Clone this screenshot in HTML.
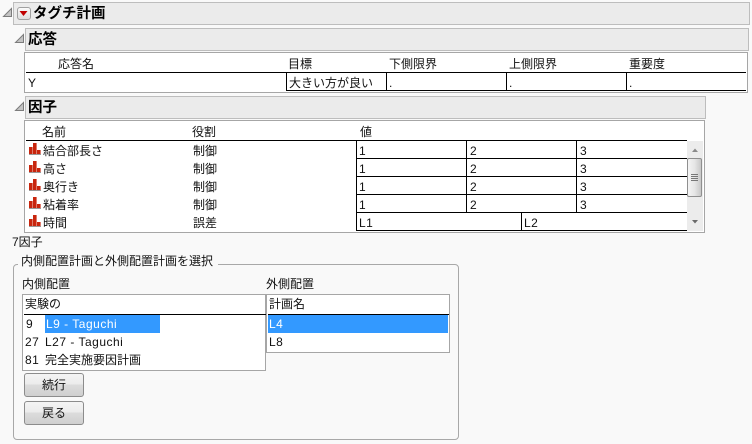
<!DOCTYPE html>
<html lang="ja"><head><meta charset="utf-8"><style>
html,body{margin:0;padding:0}
body{width:752px;height:444px;overflow:hidden;background:#f9f9f9;position:relative;font-family:"Liberation Sans","Noto Sans CJK JP",sans-serif;font-size:12px;color:#111}
div,span.t{position:absolute;box-sizing:border-box}
.t{line-height:18px;white-space:nowrap;height:18px}
.l{letter-spacing:.5px}
.bar{background:#ebebeb;border:1px solid #bdbdbd}
.b{font-weight:bold;color:#000}
.k{background:#000}
.box{background:#fff;border:1px solid #a6a6a6}
.btn{width:60px;height:24px;border:1px solid #8c8c8c;border-radius:3px;background:linear-gradient(#f4f4f4 0,#ececec 45%,#dcdcdc 50%,#cfcfcf 100%);text-align:center;line-height:22px}
svg{position:absolute;overflow:visible}
</style></head><body>

<!-- disclosure triangles -->
<svg style="left:0;top:0" width="30" height="125"><g fill="#c4c4c4" stroke="#7c7c7c" stroke-width="1"><path d="M11.500 8.500V16.500H3.500Z"/><path d="M23.500 34.500V42.500H15.500Z"/><path d="M23.500 102.500V110.500H15.500Z"/></g></svg>

<!-- title -->
<div class="bar" style="left:13px;top:2px;width:737px;height:23px"></div>
<div style="left:17px;top:7px;width:14px;height:13px;border:1px solid #a0a0a0;border-radius:3px;background:linear-gradient(#fafafa,#dedede)"></div>
<svg style="left:0;top:0" width="40" height="25"><path d="M19.500 11H27.500L23.500 16Z" fill="#c00000"/></svg>
<span class="t b" style="left:33px;top:4px;font-size:14.500px;line-height:20px;height:20px">タグチ計画</span>

<!-- response -->
<div class="bar" style="left:25px;top:28px;width:724px;height:23px"></div>
<span class="t b" style="left:28px;top:30px;font-size:14.500px;line-height:20px;height:20px">応答</span>
<div class="box" style="left:24px;top:52px;width:724px;height:41px"></div>
<div class="k" style="left:26px;top:72px;width:720px;height:1px"></div>
<div class="k" style="left:286px;top:90px;width:460px;height:1px"></div>
<div class="k" style="left:286px;top:72px;width:1px;height:19px"></div>
<div class="k" style="left:386px;top:72px;width:1px;height:19px"></div>
<div class="k" style="left:506px;top:72px;width:1px;height:19px"></div>
<div class="k" style="left:626px;top:72px;width:1px;height:19px"></div>
<span class="t" style="left:58px;top:55px">応答名</span>
<span class="t" style="left:288px;top:55px">目標</span>
<span class="t" style="left:389px;top:55px">下側限界</span>
<span class="t" style="left:509px;top:55px">上側限界</span>
<span class="t" style="left:629px;top:55px">重要度</span>
<span class="t" style="left:28px;top:74px">Y</span>
<span class="t" style="left:289px;top:74px">大きい方が良い</span>
<span class="t" style="left:389px;top:74px">.</span>
<span class="t" style="left:509px;top:74px">.</span>
<span class="t" style="left:629px;top:74px">.</span>

<!-- factors -->
<div class="bar" style="left:25px;top:96px;width:681px;height:23px"></div>
<span class="t b" style="left:28px;top:98px;font-size:14.500px;line-height:20px;height:20px">因子</span>
<div class="box" style="left:24px;top:120px;width:681px;height:113px"></div>
<div class="k" style="left:26px;top:140px;width:661px;height:1px"></div>
<div class="k" style="left:356px;top:158px;width:331px;height:1px"></div>
<div class="k" style="left:356px;top:176px;width:331px;height:1px"></div>
<div class="k" style="left:356px;top:194px;width:331px;height:1px"></div>
<div class="k" style="left:356px;top:212px;width:331px;height:1px"></div>
<div class="k" style="left:356px;top:230px;width:331px;height:1px"></div>
<div class="k" style="left:356px;top:140px;width:1px;height:91px"></div>
<div class="k" style="left:466px;top:140px;width:1px;height:72px"></div>
<div class="k" style="left:576px;top:140px;width:1px;height:72px"></div>
<div class="k" style="left:521px;top:212px;width:1px;height:19px"></div>
<span class="t" style="left:42px;top:123px">名前</span>
<span class="t" style="left:192px;top:123px">役割</span>
<span class="t" style="left:360px;top:123px">値</span>

<svg style="left:0;top:0" width="60" height="232"><g fill="#c8260e">
<path d="M29 147h3.600v7h-3.600zM33 143h3.600v11h-3.600zM37 150h3.600v4h-3.600z"/>
<path d="M29 165h3.600v7h-3.600zM33 161h3.600v11h-3.600zM37 168h3.600v4h-3.600z"/>
<path d="M29 183h3.600v7h-3.600zM33 179h3.600v11h-3.600zM37 186h3.600v4h-3.600z"/>
<path d="M29 201h3.600v7h-3.600zM33 197h3.600v11h-3.600zM37 204h3.600v4h-3.600z"/>
<path d="M29 219h3.600v7h-3.600zM33 215h3.600v11h-3.600zM37 222h3.600v4h-3.600z"/></g>
<g fill="#999"><rect x="29" y="154" width="12" height="1"/><rect x="29" y="172" width="12" height="1"/><rect x="29" y="190" width="12" height="1"/><rect x="29" y="208" width="12" height="1"/><rect x="29" y="226" width="12" height="1"/></g></svg>

<span class="t" style="left:43px;top:142px">結合部長さ</span><span class="t" style="left:193px;top:142px">制御</span>
<span class="t" style="left:43px;top:160px">高さ</span><span class="t" style="left:193px;top:160px">制御</span>
<span class="t" style="left:43px;top:178px">奥行き</span><span class="t" style="left:193px;top:178px">制御</span>
<span class="t" style="left:43px;top:196px">粘着率</span><span class="t" style="left:193px;top:196px">制御</span>
<span class="t" style="left:43px;top:214px">時間</span><span class="t" style="left:193px;top:214px">誤差</span>

<span class="t" style="left:359px;top:142px">1</span><span class="t" style="left:470px;top:142px">2</span><span class="t" style="left:580px;top:142px">3</span>
<span class="t" style="left:359px;top:160px">1</span><span class="t" style="left:470px;top:160px">2</span><span class="t" style="left:580px;top:160px">3</span>
<span class="t" style="left:359px;top:178px">1</span><span class="t" style="left:470px;top:178px">2</span><span class="t" style="left:580px;top:178px">3</span>
<span class="t" style="left:359px;top:196px">1</span><span class="t" style="left:470px;top:196px">2</span><span class="t" style="left:580px;top:196px">3</span>
<span class="t l" style="left:359px;top:214px">L1</span><span class="t l" style="left:524px;top:214px">L2</span>

<!-- scrollbar -->
<div style="left:687px;top:141px;width:16px;height:90px;background:#ececec"></div>
<div style="left:687px;top:158px;width:15px;height:39px;border:1px solid #8f8f8f;border-radius:2px;background:linear-gradient(90deg,#f4f4f4,#e6e6e6 50%,#c8c8c8)"></div>
<svg style="left:0;top:0" width="704" height="232"><path d="M695 148.500L698 152H692Z" fill="#8a8a8a"/><path d="M692 220H698L695 223.500Z" fill="#6a6a6a"/><g fill="#777"><rect x="691" y="174" width="7" height="1"/><rect x="691" y="176" width="7" height="1"/><rect x="691" y="178" width="7" height="1"/><rect x="691" y="180" width="7" height="1"/></g></svg>

<span class="t" style="left:12px;top:233px">7因子</span>

<!-- group -->
<div style="left:13px;top:264px;width:446px;height:176px;border:1px solid #a8a8a8;border-radius:4px"></div>
<div style="left:18px;top:258px;width:200px;height:12px;background:#f9f9f9"></div>
<span class="t" style="left:21px;top:252px">内側配置計画と外側配置計画を選択</span>

<span class="t" style="left:22px;top:275px">内側配置</span>
<span class="t" style="left:266px;top:275px">外側配置</span>

<div class="box" style="left:22px;top:294px;width:244px;height:77px"></div>
<div class="k" style="left:24px;top:314px;width:242px;height:1px"></div>
<div style="left:45px;top:315px;width:115px;height:18px;background:#3399ff"></div>
<span class="t" style="left:25px;top:295px">実験の</span>
<span class="t l" style="left:26px;top:315px">9</span><span class="t l" style="left:46px;top:315px;color:#fff">L9 - Taguchi</span>
<span class="t l" style="left:25px;top:333px">27</span><span class="t l" style="left:45px;top:333px">L27 - Taguchi</span>
<span class="t l" style="left:25px;top:351px">81</span><span class="t" style="left:45px;top:351px">完全実施要因計画</span>

<div class="box" style="left:266px;top:294px;width:184px;height:59px"></div>
<div class="k" style="left:268px;top:314px;width:181px;height:1px"></div>
<div style="left:268px;top:315px;width:180px;height:18px;background:#3399ff"></div>
<span class="t" style="left:269px;top:295px">計画名</span>
<span class="t l" style="left:269px;top:315px;color:#fff">L4</span>
<span class="t l" style="left:269px;top:333px">L8</span>

<div class="btn" style="left:24px;top:373px">続行</div>
<div class="btn" style="left:24px;top:401px">戻る</div>
</body></html>
